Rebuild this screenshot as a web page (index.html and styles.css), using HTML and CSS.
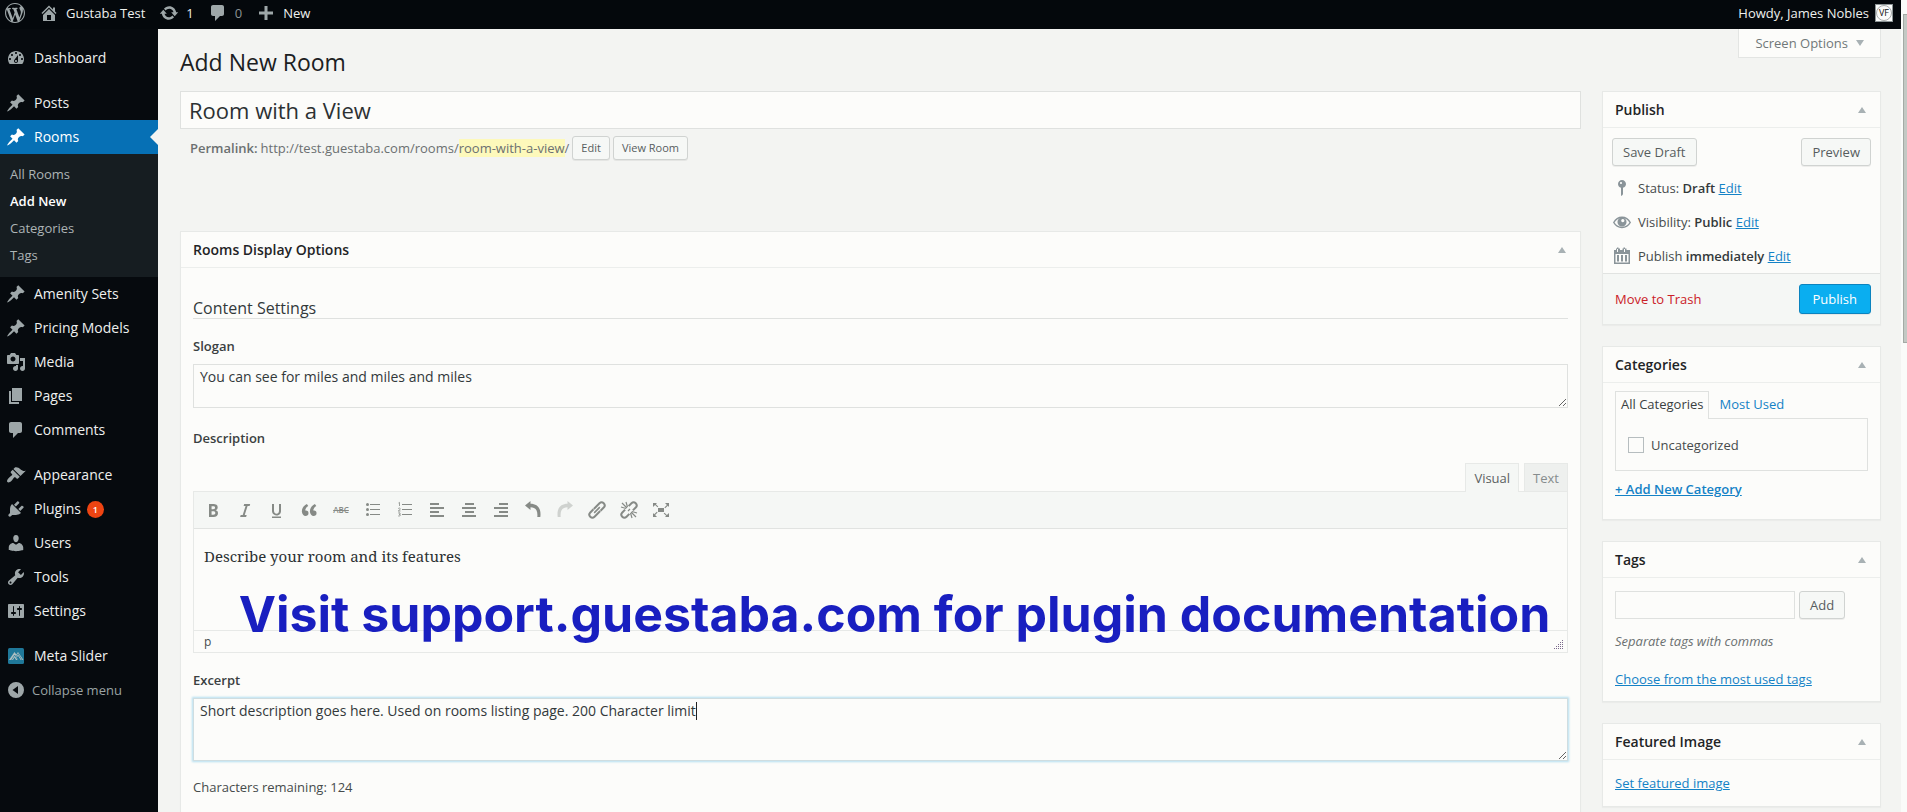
FILE: index.html
```html
<!DOCTYPE html>
<html lang="en">
<head>
<meta charset="utf-8">
<title>Add New Room</title>
<meta name="viewport" content="width=device-width, initial-scale=1">
<link rel="stylesheet" href="styles.css">
</head>
<body>
<svg class="sprite" aria-hidden="true">
  <symbol id="i-wp" viewBox="0 0 20 20"><path d="M20 10c0-5.51-4.49-10-10-10C4.48 0 0 4.49 0 10c0 5.52 4.48 10 10 10 5.51 0 10-4.48 10-10zM7.78 15.37L4.37 6.22c.55-.02 1.17-.08 1.17-.08.5-.06.44-1.13-.06-1.11 0 0-1.45.11-2.37.11-.18 0-.37 0-.58-.01C4.12 2.69 6.87 1.11 10 1.11c2.33 0 4.45.87 6.05 2.34-.68-.11-1.65.39-1.65 1.58 0 .74.45 1.36.9 2.1.35.61.55 1.36.55 2.46 0 1.49-1.4 5-1.4 5l-3.03-8.37c.54-.02.82-.17.82-.17.5-.05.44-1.25-.06-1.22 0 0-1.44.12-2.38.12-.87 0-2.33-.12-2.33-.12-.5-.03-.56 1.2-.06 1.22l.92.08 1.26 3.41zM17.41 10c.24-.64.74-1.87.43-4.25.7 1.29 1.05 2.71 1.05 4.25 0 3.29-1.73 6.24-4.4 7.78.97-2.59 1.94-5.2 2.92-7.78zM6.1 18.09C3.12 16.65 1.11 13.53 1.11 10c0-1.3.23-2.48.72-3.59C3.25 10.3 4.67 14.2 6.1 18.09zm4.03-6.63l2.58 6.98c-.86.29-1.76.45-2.71.45-.79 0-1.57-.11-2.29-.33.81-2.38 1.62-4.74 2.42-7.1z"/></symbol>
  <symbol id="i-home" viewBox="0 0 20 20"><path fill-rule="evenodd" d="M16 8.5l1.53 1.53-1.06 1.06L10 4.6l-6.47 6.49-1.06-1.06L10 2.5l4 4v-2h2v4zm-6-2.46l6 5.99V18H4v-5.97zM12 17v-5H8v5h4z"/></symbol>
  <symbol id="i-update" viewBox="0 0 20 20"><path d="M10.2 3.28c3.53 0 6.43 2.61 6.92 6h2.08l-3.5 4-3.5-4h2.32c-.45-1.97-2.21-3.45-4.32-3.45-1.45 0-2.73.71-3.54 1.78L4.95 5.66C6.23 4.2 8.11 3.28 10.2 3.28zm-.4 13.44c-3.52 0-6.43-2.61-6.92-6H.8l3.5-4 3.5 4H5.48c.45 1.97 2.21 3.45 4.32 3.45 1.45 0 2.73-.71 3.54-1.78l1.71 1.95c-1.28 1.46-3.15 2.38-5.25 2.38z"/></symbol>
  <symbol id="i-comment" viewBox="0 0 20 20"><path d="M5 2h9c1.1 0 2 .9 2 2v7c0 1.1-.9 2-2 2h-2l-5 5v-5H5c-1.1 0-2-.9-2-2V4c0-1.1.9-2 2-2z"/></symbol>
  <symbol id="i-plus" viewBox="0 0 20 20"><path d="M17 8.500v3h-5.500V17h-3v-5.500H3v-3h5.500V3h3v5.500z"/></symbol>
  <symbol id="i-dash" viewBox="0 0 20 20"><path fill-rule="evenodd" d="M3.760 16h12.480c1.100-1.370 1.760-3.110 1.760-5 0-4.420-3.580-8-8-8s-8 3.580-8 8c0 1.890.66 3.630 1.760 5zM10 4c.55 0 1 .45 1 1s-.45 1-1 1-1-.45-1-1 .45-1 1-1zM6 6c.55 0 1 .45 1 1s-.45 1-1 1-1-.45-1-1 .45-1 1-1zm8 0c.55 0 1 .45 1 1s-.45 1-1 1-1-.45-1-1 .45-1 1-1zm-5.370 5.550L12 7v6c0 1.100-.9 2-2 2s-2-.9-2-2c0-.57.24-1.080.63-1.450zM4 10c.55 0 1 .45 1 1s-.45 1-1 1-1-.45-1-1 .45-1 1-1zm12 0c.55 0 1 .45 1 1s-.45 1-1 1-1-.45-1-1 .45-1 1-1zm-5 3c0-.55-.45-1-1-1s-1 .45-1 1 .45 1 1 1 1-.45 1-1z"/></symbol>
  <symbol id="i-pin" viewBox="0 0 20 20"><path d="M10.44 3.02l1.82-1.82 6.36 6.35-1.83 1.82c-1.05-.68-2.48-.57-3.41.36l-.75.75c-.92.93-1.04 2.35-.35 3.41l-1.83 1.82-2.41-2.41-2.8 2.79c-.42.42-3.38 2.71-3.8 2.29s1.86-3.39 2.28-3.81l2.79-2.79L4.1 9.36l1.83-1.82c1.05.69 2.48.57 3.4-.36l.75-.75c.93-.92 1.05-2.35.36-3.41z"/></symbol>
  <symbol id="i-media" viewBox="0 0 20 20"><path fill-rule="evenodd" d="M13 11V4c0-.55-.45-1-1-1h-1.670L9 1H5L3.670 3H2c-.55 0-1 .45-1 1v7c0 .55.45 1 1 1h10c.55 0 1-.45 1-1zM7 4.500c1.380 0 2.500 1.120 2.500 2.500S8.380 9.500 7 9.500 4.500 8.380 4.500 7 5.620 4.500 7 4.500zM14 6h5v10.500c0 1.380-1.120 2.500-2.500 2.500S14 17.880 14 16.500s1.120-2.500 2.500-2.500c.17 0 .34.02.5.05V9h-3V6zm-4 8.050V13h2v3.500c0 1.380-1.120 2.500-2.500 2.500S7 17.880 7 16.500 8.120 14 9.500 14c.17 0 .34.02.5.05z"/></symbol>
  <symbol id="i-page" viewBox="0 0 20 20"><path d="M6 15V2h10v13H6zm-1 1h8v2H3V5h2v11z"/></symbol>
  <symbol id="i-brush" viewBox="0 0 20 20"><path d="M14.480 11.060L7.410 3.990l1.500-1.500c.5-.56 2.300-.47 3.510.32 1.210.8 1.430 1.280 2.910 2.100 1.180.64 2.450 1.260 4.450.85zm-.71.71L6.700 4.700 4.930 6.470c-.39.39-.39 1.020 0 1.410l1.060 1.060c.39.39.39 1.030 0 1.420-.6.6-1.430 1.110-2.210 1.690-.35.26-.7.53-1.010.84C1.430 14.230.4 16.080 1.400 17.070c.99 1 2.840-.03 4.180-1.360.31-.31.58-.66.85-1.020.57-.78 1.080-1.610 1.690-2.210.39-.39 1.020-.39 1.410 0l1.060 1.060c.39.39 1.020.39 1.410 0z"/></symbol>
  <symbol id="i-plug" viewBox="0 0 20 20"><path d="M13.11 4.36L9.87 7.6 8 5.73l3.24-3.24c.35-.34 1.05-.2 1.56.32.52.51.66 1.21.31 1.55zm-8 1.77l.91-1.12 9.01 9.01-1.19.84c-.71.71-2.63 1.16-3.82 1.16H6.14L4.9 17.26c-.59.59-1.54.59-2.12 0-.59-.58-.59-1.53 0-2.12l1.24-1.24v-3.88c0-1.13.4-3.19 1.09-3.89zm7.26 3.97l3.24-3.24c.34-.35 1.04-.21 1.55.31.52.51.66 1.21.31 1.55l-3.24 3.25z"/></symbol>
  <symbol id="i-user" viewBox="0 0 20 20"><path d="M10 9.25c-2.27 0-2.73-3.44-2.73-3.44C7 4.02 7.82 2 9.97 2c2.16 0 2.98 2.02 2.71 3.81 0 0-.41 3.44-2.68 3.44zm0 2.57L12.72 10c2.39 0 4.52 2.33 4.52 4.53v2.49s-3.65 1.13-7.24 1.13c-3.65 0-7.24-1.13-7.24-1.13v-2.49c0-2.25 1.94-4.48 4.47-4.48z"/></symbol>
  <symbol id="i-tool" viewBox="0 0 20 20"><path fill-rule="evenodd" d="M16.68 9.77c-1.34 1.34-3.3 1.67-4.95.99l-5.41 6.52c-.99.99-2.59.99-3.58 0s-.99-2.59 0-3.57l6.52-5.42c-.68-1.65-.35-3.61.99-4.95 1.28-1.28 3.12-1.62 4.72-1.06l-2.89 2.89 2.82 2.82 2.86-2.87c.53 1.58.18 3.39-1.08 4.65zM3.81 16.21c.4.39 1.04.39 1.43 0 .4-.4.4-1.04 0-1.43-.39-.4-1.03-.4-1.43 0-.39.39-.39 1.03 0 1.43z"/></symbol>
  <symbol id="i-set" viewBox="0 0 20 20"><path fill-rule="evenodd" d="M18 16V4c0-.55-.45-1-1-1H3c-.55 0-1 .45-1 1v12c0 .55.45 1 1 1h14c.55 0 1-.45 1-1zM8 11h1c.55 0 1 .45 1 1s-.45 1-1 1H8v1.500c0 .28-.22.5-.5.5s-.5-.22-.5-.5V13H6c-.55 0-1-.45-1-1s.45-1 1-1h1V5.500c0-.28.22-.5.5-.5s.5.22.5.5V11zm5-2h-1c-.55 0-1-.45-1-1s.45-1 1-1h1V5.500c0-.28.22-.5.5-.5s.5.22.5.5V7h1c.55 0 1 .45 1 1s-.45 1-1 1h-1v5.500c0 .28-.22.5-.5.5s-.5-.22-.5-.5V9z"/></symbol>
  <symbol id="i-meta" viewBox="0 0 20 20"><rect x="2" y="2" width="16" height="16" rx="1.500" fill="#1f7899"/><path d="M3 14L8.500 6l1.800 2.600L12 6l5.500 8h-2.800L12 9.800 10.800 11.600 12.300 14H10L8.500 11.500 7 14z" fill="#b0c0c2"/><path d="M5.500 14l3.200-5 3.100 5M9.800 11l2.300-3.300L16 14" stroke="#1f7899" stroke-width=".7" fill="none"/></symbol>
  <symbol id="i-collapse" viewBox="0 0 20 20"><path fill-rule="evenodd" d="M10 2a8 8 0 1 0 0 16 8 8 0 0 0 0-16zm2 4v8l-5.500-4z"/></symbol>
  <symbol id="i-status" viewBox="0 0 20 20"><path fill-rule="evenodd" d="M14 6c0 1.86-1.28 3.41-3 3.86V16c0 1-2 2-2 2V9.86c-1.72-.45-3-2-3-3.86 0-2.21 1.79-4 4-4s4 1.79 4 4zM8 5c0 .55.45 1 1 1s1-.45 1-1-.45-1-1-1-1 .45-1 1z"/></symbol>
  <symbol id="i-eye" viewBox="0 0 20 20"><path d="M1.800 10.500C5.500 3.600 14.500 3.600 18.200 10.500 14.500 17 5.500 17 1.800 10.500z" fill="none" stroke="currentColor" stroke-width="1.500"/><path fill-rule="evenodd" d="M10 5.500a4.500 4.500 0 1 0 .01 0zM10.800 7a1.600 1.600 0 1 1-.01 0z"/></symbol>
  <symbol id="i-cal" viewBox="0 0 20 20"><path fill-rule="evenodd" d="M2 4h2V2.500h1V1.500h1.500v1H8V4h2.500V2.500h1V1.500H13v1h1.500V4H18v14H2zM3.500 8v8.500h13V8zM5 9h2v6.500H5zm4 0h2v6.500H9zm4 0h2v6.500h-2z"/><path d="M5 3h1v3H5zM12 3h1v3h-1z" fill="#fcfcfa"/></symbol>
  <symbol id="i-bold" viewBox="0 0 20 20"><path fill-rule="evenodd" d="M6 4v13h4.540c1.370 0 2.460-.33 3.260-1 .8-.66 1.200-1.580 1.200-2.770 0-.84-.17-1.510-.51-2.010s-.9-.85-1.670-1.030v-.09c.57-.1 1.020-.4 1.360-.9s.51-1.130.51-1.910c0-1.140-.39-1.980-1.170-2.500C12.750 4.260 11.500 4 9.780 4H6zm2.570 5.150V6.260h1.360c.73 0 1.270.11 1.610.32.34.22.51.58.51 1.070 0 .54-.16.92-.47 1.150s-.82.35-1.510.35h-1.500zm0 2.190h1.600c1.440 0 2.160.53 2.160 1.610 0 .6-.17 1.050-.51 1.340s-.86.43-1.570.43H8.570v-3.380z"/></symbol>
  <symbol id="i-italic" viewBox="0 0 20 20"><path d="M15.200 4h-6l-.6 2h2l-2.900 9h-2l-.6 2h6l.6-2h-2l2.900-9h2z"/></symbol>
  <symbol id="i-under" viewBox="0 0 20 20"><path d="M14 4h-2v6.710c0 1.990-1.120 2.980-2.450 2.980-1.320 0-2.550-1-2.550-2.960V4H5v6.870c0 1.910 1 4.540 4.480 4.540 3.490 0 4.520-2.580 4.520-4.500V4zm0 14v-1.500H5V18h9z"/></symbol>
  <symbol id="i-quote" viewBox="0 0 20 20"><path d="M9.490 13.220c0-.74-.2-1.380-.61-1.900-.62-.78-1.830-.88-2.530-.72-.29-1.650 1.110-3.750 2.920-4.650L7.880 4c-2.730 1.300-5.420 4.280-4.960 8.050C3.210 14.430 4.590 16 6.540 16c.85 0 1.560-.25 2.120-.75s.83-1.180.83-2.030zm8.050 0c0-.74-.2-1.380-.61-1.900-.63-.78-1.830-.88-2.530-.72-.29-1.650 1.110-3.750 2.920-4.650L15.930 4c-2.730 1.300-5.410 4.280-4.950 8.050.29 2.380 1.660 3.950 3.610 3.950.85 0 1.560-.25 2.120-.75s.83-1.180.83-2.030z"/></symbol>
  <symbol id="i-ul" viewBox="0 0 20 20"><path d="M7 4h10v1H7zm0 5h10v1H7zm0 5h10v1H7z"/><circle cx="4.500" cy="4.500" r="1.500"/><circle cx="4.500" cy="9.500" r="1.500"/><circle cx="4.500" cy="14.500" r="1.500"/></symbol>
  <symbol id="i-ol" viewBox="0 0 20 20"><path d="M7 4h10v1H7zm0 5h10v1H7zm0 5h10v1H7z"/><path d="M3.500 3l1-.6V6M3.200 8.500q1.500-1 2 0t-2 2.500h2.300M3.200 13q2-.8 2 .3t-1.200.9q1.500 0 1.500 1t-2.300.8" fill="none" stroke="currentColor" stroke-width=".8"/></symbol>
  <symbol id="i-left" viewBox="0 0 20 20"><path d="M3 3h9v2H3zm0 4h14v2H3zm0 4h9v2H3zm0 4h14v2H3z"/></symbol>
  <symbol id="i-center" viewBox="0 0 20 20"><path d="M6 3h9v2H6zM3 7h14v2H3zm3 4h9v2H6zm-3 4h14v2H3z"/></symbol>
  <symbol id="i-right" viewBox="0 0 20 20"><path d="M8 3h9v2H8zM3 7h14v2H3zm5 4h9v2H8zm-5 4h14v2H3z"/></symbol>
  <symbol id="i-undo" viewBox="0 0 20 20"><path d="M7.500 1L2 5.500 7.500 10V7.200c5 0 7.500 3.300 6.800 9.800h3C18.500 8.500 14.500 3.800 7.500 3.800z"/></symbol>
  <symbol id="i-redo" viewBox="0 0 20 20"><path d="M12.500 1L18 5.500 12.500 10V7.200c-5 0-7.500 3.300-6.800 9.800h-3C1.500 8.500 5.500 3.800 12.500 3.800z"/></symbol>
  <symbol id="i-link" viewBox="0 0 20 20"><g transform="rotate(-45 10 10)" fill="none" stroke="currentColor" stroke-width="2"><path d="M11.500 13H3.500a3 3 0 0 1 0-6H8M8.500 7h8a3 3 0 0 1 0 6H12"/><path d="M6 10h8" stroke-width="1.600"/></g></symbol>
  <symbol id="i-unlink" viewBox="0 0 20 20"><g transform="rotate(-45 10 10)" fill="none" stroke="currentColor" stroke-width="2"><path d="M7.500 13h-4a3 3 0 0 1 0-6h4M12.500 7h4a3 3 0 0 1 0 6h-4"/></g><path d="M3 3l5 5M7 2l1.500 5M2 7l5 1.500M17 17l-5-5M13 18l-1.500-5M18 13l-5-1.500M9 11l2-2" stroke="currentColor" stroke-width="1.200"/></symbol>
  <symbol id="i-full" viewBox="0 0 20 20"><path d="M7 8h6v4H7zM2 3h4L4.800 4.200l2.500 2.300-.8.8-2.400-2.400L2 7zM18 3v4l-1.200-1.200-2.600 2.400-.8-.8 2.500-2.400L14 3zM2 17v-4l1.200 1.200 2.600-2.400.8.800-2.500 2.400L6 17zM18 17h-4l1.200-1.200-2.500-2.300.8-.8 2.400 2.400L18 13z"/></symbol>
</svg>

<div class="shell">
  <div class="page">
    <header class="adminbar">
      <a class="bar-item" href="#" aria-label="About WordPress"><svg class="icon"><use href="#i-wp"/></svg></a>
      <a class="bar-item" href="#"><svg class="icon"><use href="#i-home"/></svg>Gustaba Test</a>
      <a class="bar-item" href="#"><svg class="icon"><use href="#i-update"/></svg>1</a>
      <a class="bar-item muted" href="#"><svg class="icon"><use href="#i-comment"/></svg>0</a>
      <a class="bar-item" href="#"><svg class="icon"><use href="#i-plus"/></svg>New</a>
      <a class="bar-item account" href="#">Howdy, James Nobles<span class="avatar"><span>VF</span></span></a>
    </header>
    <div class="columns">
      <nav class="menu" aria-label="Main menu">
        <ul class="group">
          <li><a class="item" href="#"><svg class="icon"><use href="#i-dash"/></svg>Dashboard</a></li>
        </ul>
        <ul class="group">
          <li><a class="item" href="#"><svg class="icon"><use href="#i-pin"/></svg>Posts</a></li>
          <li>
            <a class="item current" href="#"><svg class="icon"><use href="#i-pin"/></svg>Rooms</a>
            <ul class="submenu">
              <li><a href="#">All Rooms</a></li>
              <li><a class="active" href="#">Add New</a></li>
              <li><a href="#">Categories</a></li>
              <li><a href="#">Tags</a></li>
            </ul>
          </li>
          <li><a class="item" href="#"><svg class="icon"><use href="#i-pin"/></svg>Amenity Sets</a></li>
          <li><a class="item" href="#"><svg class="icon"><use href="#i-pin"/></svg>Pricing Models</a></li>
          <li><a class="item" href="#"><svg class="icon"><use href="#i-media"/></svg>Media</a></li>
          <li><a class="item" href="#"><svg class="icon"><use href="#i-page"/></svg>Pages</a></li>
          <li><a class="item" href="#"><svg class="icon"><use href="#i-comment"/></svg>Comments</a></li>
        </ul>
        <ul class="group">
          <li><a class="item" href="#"><svg class="icon"><use href="#i-brush"/></svg>Appearance</a></li>
          <li><a class="item" href="#"><svg class="icon"><use href="#i-plug"/></svg>Plugins<span class="count">1</span></a></li>
          <li><a class="item" href="#"><svg class="icon"><use href="#i-user"/></svg>Users</a></li>
          <li><a class="item" href="#"><svg class="icon"><use href="#i-tool"/></svg>Tools</a></li>
          <li><a class="item" href="#"><svg class="icon"><use href="#i-set"/></svg>Settings</a></li>
        </ul>
        <ul class="group">
          <li><a class="item" href="#"><svg class="icon"><use href="#i-meta"/></svg>Meta Slider</a></li>
          <li><button class="item collapse" type="button"><svg class="icon"><use href="#i-collapse"/></svg>Collapse menu</button></li>
        </ul>
      </nav>

      <main class="content">
        <div class="top">
          <h1>Add New Room</h1>
          <button class="screen-options" type="button">Screen Options<span class="tri down"></span></button>
        </div>
        <div class="body-cols">
          <div class="primary">
            <input class="title-input" type="text" value="Room with a View" aria-label="Room title">
            <div class="permalink">
              <strong>Permalink:</strong>
              <span>http://test.guestaba.com/rooms/<mark>room-with-a-view</mark>/</span>
              <button class="btn tiny" type="button">Edit</button>
              <button class="btn tiny" type="button">View Room</button>
            </div>
            <section class="box options">
              <div class="box-head"><h2>Rooms Display Options</h2><button class="toggle" type="button" aria-label="Toggle panel"><span class="tri"></span></button></div>
              <div class="options-body">
                <h3>Content Settings</h3>
                <label class="field-label" for="slogan">Slogan</label>
                <textarea class="area slogan" id="slogan">You can see for miles and miles and miles</textarea>
                <div class="field-label description-label" id="desc-label">Description</div>
                <div class="editor-tabs">
                  <button class="etab on" type="button">Visual</button>
                  <button class="etab" type="button">Text</button>
                </div>
                <div class="editor">
                  <div class="toolbar">
                    <button class="tool" type="button" aria-label="Bold"><svg class="icon"><use href="#i-bold"/></svg></button>
                    <button class="tool" type="button" aria-label="Italic"><svg class="icon"><use href="#i-italic"/></svg></button>
                    <button class="tool" type="button" aria-label="Underline"><svg class="icon"><use href="#i-under"/></svg></button>
                    <button class="tool" type="button" aria-label="Blockquote"><svg class="icon"><use href="#i-quote"/></svg></button>
                    <button class="tool strike" type="button" aria-label="Strikethrough">ABC</button>
                    <button class="tool" type="button" aria-label="Bulleted list"><svg class="icon"><use href="#i-ul"/></svg></button>
                    <button class="tool" type="button" aria-label="Numbered list"><svg class="icon"><use href="#i-ol"/></svg></button>
                    <button class="tool" type="button" aria-label="Align left"><svg class="icon"><use href="#i-left"/></svg></button>
                    <button class="tool" type="button" aria-label="Align center"><svg class="icon"><use href="#i-center"/></svg></button>
                    <button class="tool" type="button" aria-label="Align right"><svg class="icon"><use href="#i-right"/></svg></button>
                    <button class="tool" type="button" aria-label="Undo"><svg class="icon"><use href="#i-undo"/></svg></button>
                    <button class="tool" type="button" aria-label="Redo" disabled><svg class="icon"><use href="#i-redo"/></svg></button>
                    <button class="tool" type="button" aria-label="Insert link"><svg class="icon"><use href="#i-link"/></svg></button>
                    <button class="tool" type="button" aria-label="Remove link"><svg class="icon"><use href="#i-unlink"/></svg></button>
                    <button class="tool" type="button" aria-label="Fullscreen"><svg class="icon"><use href="#i-full"/></svg></button>
                  </div>
                  <div class="editor-body" contenteditable="true" role="textbox" aria-labelledby="desc-label"><p>Describe your room and its features</p></div>
                  <div class="statusbar"><span>p</span>
                    <svg class="grip" viewBox="0 0 10 10" aria-hidden="true"><path d="M8 0h1v1H8zM6 2h1v1H6zM8 2h1v1H8zM4 4h1v1H4zM6 4h1v1H6zM8 4h1v1H8zM2 6h1v1H2zM4 6h1v1H4zM6 6h1v1H6zM8 6h1v1H8zM0 8h1v1H0zM2 8h1v1H2zM4 8h1v1H4zM6 8h1v1H6zM8 8h1v1H8z"/></svg>
                  </div>
                  <p class="caption">Visit support.guestaba.com for plugin documentation</p>
                </div>
                <label class="field-label excerpt-label" for="excerpt">Excerpt</label>
                <div class="excerpt-wrap">
                  <textarea class="area excerpt" id="excerpt">Short description goes here. Used on rooms listing page. 200 Character limit</textarea>
                  <span class="caret"></span>
                </div>
                <p class="remaining">Characters remaining: 124</p>
              </div>
            </section>
          </div>

          <aside class="secondary">
            <section class="box">
              <div class="box-head"><h2>Publish</h2><button class="toggle" type="button" aria-label="Toggle panel"><span class="tri"></span></button></div>
              <div class="draft-actions">
                <button class="btn" type="button">Save Draft</button>
                <button class="btn" type="button">Preview</button>
              </div>
              <ul class="meta">
                <li><svg class="icon"><use href="#i-status"/></svg><span>Status: <b>Draft</b> <a href="#">Edit</a></span></li>
                <li><svg class="icon"><use href="#i-eye"/></svg><span>Visibility: <b>Public</b> <a href="#">Edit</a></span></li>
                <li><svg class="icon"><use href="#i-cal"/></svg><span>Publish <b>immediately</b> <a href="#">Edit</a></span></li>
              </ul>
              <div class="publish-foot">
                <a class="trash" href="#">Move to Trash</a>
                <button class="btn primary-btn" type="button">Publish</button>
              </div>
            </section>
            <section class="box">
              <div class="box-head"><h2>Categories</h2><button class="toggle" type="button" aria-label="Toggle panel"><span class="tri"></span></button></div>
              <div class="cats">
                <div class="cat-tabs"><a class="ctab on" href="#">All Categories</a><a class="ctab" href="#">Most Used</a></div>
                <div class="cat-panel"><input type="checkbox" id="uncat"><label for="uncat">Uncategorized</label></div>
                <a class="add-cat" href="#">+ Add New Category</a>
              </div>
            </section>
            <section class="box">
              <div class="box-head"><h2>Tags</h2><button class="toggle" type="button" aria-label="Toggle panel"><span class="tri"></span></button></div>
              <div class="tags">
                <div class="tag-row"><input class="tag-input" type="text" aria-label="Add new tag"><button class="btn" type="button">Add</button></div>
                <p class="hint">Separate tags with commas</p>
                <a href="#">Choose from the most used tags</a>
              </div>
            </section>
            <section class="box">
              <div class="box-head"><h2>Featured Image</h2><button class="toggle" type="button" aria-label="Toggle panel"><span class="tri"></span></button></div>
              <div class="featured"><a href="#">Set featured image</a></div>
            </section>
          </aside>
        </div>
      </main>
    </div>
  </div>
  <div class="scroll-track"><div class="scroll-thumb"></div></div>
</div>
</body>
</html>
```

FILE: styles.css
```css
*, *::before, *::after { box-sizing: border-box; }
body {
  margin: 0;
  font: 13px/18px "Open Sans", sans-serif;
  color: #464b4c;
  background: #f3f4f2;
}
ul, h1, h2, h3, p { margin: 0; padding: 0; }
ul { list-style: none; }
button, input, textarea { font: inherit; color: inherit; margin: 0; }
button { cursor: pointer; }
a { color: #1482c6; }
.sprite { position: absolute; width: 0; height: 0; }
.icon { width: 20px; height: 20px; fill: currentColor; flex: none; }

.shell { display: flex; height: 100vh; overflow: hidden; }
.page { flex: 1; min-width: 0; display: flex; flex-direction: column; }
.scroll-track { width: 6px; padding: 14px 0 0 2px; background: #fafbf9; flex: none; }
.scroll-thumb { height: 329px; background: #c3c9c4; border: 1px solid #a4aaa5; border-right: 0; }

/* Admin bar */
.adminbar {
  display: flex;
  gap: 14px;
  height: 29px;
  padding: 0 8px 3px 5px;
  background: #04080c;
  flex: none;
}
.bar-item { display: flex; align-items: center; gap: 7px; color: #eef0ee; text-decoration: none; }
.bar-item .icon { color: #9ea7a9; }
.bar-item.muted { color: #8b9394; }
.account { margin-left: auto; gap: 6px; }
.avatar {
  display: flex; align-items: center; justify-content: center;
  width: 18px; height: 18px;
  background: #fbfcfb; border: 1px solid #8c9496;
}
.avatar span {
  width: 16px; height: 16px; border: 1px solid #a8acac; border-radius: 50%;
  font-size: 9px; line-height: 14px; color: #111; display: flex; justify-content: center;
}

/* Side menu */
.columns { flex: 1; display: flex; min-height: 0; }
.menu { width: 158px; flex: none; padding-top: 12px; background: #060a0e; overflow: hidden; }
.group { margin-bottom: 11px; }
.item {
  position: relative;
  display: flex; align-items: center; gap: 8px;
  width: 100%; height: 34px; padding: 0 6px;
  font-size: 14px; color: #eef0ee; text-decoration: none;
  background: none; border: 0;
}
.item .icon { color: #9ea7a9; }
.item.current { background: #0670b5; color: #fff; }
.item.current .icon { color: #fff; }
.item.current::after {
  content: ""; position: absolute; right: 0; top: 9px;
  border: 8px solid transparent; border-left: 0; border-right-color: #f3f4f2;
}
.item.collapse { gap: 6px; font-size: 13px; color: #9aa3a4; }
.submenu { padding: 7px 0 8px; background: #161d21; }
.submenu a { display: block; padding: 0 10px; line-height: 27px; color: #adb4b5; text-decoration: none; }
.submenu a.active { color: #fff; font-weight: 600; }
.count {
  width: 17px; height: 17px; margin-left: -2px; border-radius: 50%;
  background: #ee4412; color: #fff; font-size: 9px; font-weight: 600; line-height: 17px; text-align: center;
}

/* Page heading */
.content { flex: 1; min-width: 0; padding: 0 20px 0 22px; }
.top { display: flex; justify-content: space-between; align-items: flex-start; height: 62px; }
h1 { padding-top: 18px; font-size: 23px; line-height: 30px; font-weight: 400; color: #1b2022; }
.screen-options {
  display: flex; align-items: center; gap: 8px;
  height: 29px; padding: 0 16px; color: #707879;
  background: #fcfcfa; border: 1px solid #e3e5e3; border-top: 0;
}
.tri { display: block; border: 4px solid transparent; border-top: 0; border-bottom: 6px solid #a8b1b4; }
.tri.down { border-bottom: 0; border-top: 6px solid #a8b1b4; }

.body-cols { display: flex; gap: 21px; align-items: flex-start; }
.primary { flex: 1; min-width: 0; }
.secondary { width: 279px; flex: none; display: flex; flex-direction: column; gap: 21px; }

.title-input {
  display: block; width: 100%; height: 38px; padding: 0 8px;
  font-size: 22px; color: #2c3133;
  background: #fcfcfa; border: 1px solid #dfe1df;
}
.permalink { display: flex; align-items: center; gap: 3px; height: 38px; padding-left: 10px; margin-bottom: 64px; color: #6b7071; }
.permalink strong { font-weight: 600; }
mark { background: #fdf9bb; color: inherit; }

.btn {
  height: 28px; padding: 0 10px; white-space: nowrap;
  color: #565d5e; background: #f6f8f6; border: 1px solid #d0d3d1; border-radius: 3px;
  box-shadow: 0 1px 0 rgba(0,0,0,.06);
}
.btn.tiny { height: 24px; padding: 0 8px; font-size: 11px; }

/* Panels */
.box { background: #fcfcfa; border: 1px solid #e7e9e7; box-shadow: 0 1px 1px rgba(0,0,0,.03); }
.box-head {
  display: flex; justify-content: space-between; align-items: center;
  height: 36px; padding: 0 14px 0 12px; border-bottom: 1px solid #eceeec;
}
.box-head h2 { font-size: 14px; line-height: 20px; font-weight: 600; color: #1f2426; }
.toggle { padding: 0; border: 0; background: none; }

.options-body { padding: 31px 12px; }
h3 { margin-bottom: 18px; font-size: 16px; line-height: 19px; font-weight: 500; color: #33393a; border-bottom: 1px solid #dfe1df; }
.field-label { display: block; margin-bottom: 9px; font-weight: 600; color: #3a4041; }
.area {
  display: block; width: 100%; padding: 2px 6px;
  font-size: 14px; line-height: 20px; color: #33393a; resize: vertical;
  background: #fcfcfa; border: 1px solid #dfe1df; border-radius: 0; outline: 0;
}
.slogan { height: 44px; }
.description-label { margin: 21px 0 16px; }

.editor-tabs { display: flex; justify-content: flex-end; gap: 5px; }
.etab {
  height: 28px; padding: 0 8px; color: #868c8d;
  background: #eef0ee; border: 1px solid #e7e9e7; border-bottom: 0;
}
.etab.on { position: relative; height: 29px; margin-bottom: -1px; color: #5b6162; background: #f5f7f5; z-index: 1; }
.editor { position: relative; border: 1px solid #e7e9e7; }
.toolbar { display: flex; gap: 2px; height: 37px; padding: 3px 4px; background: #f5f7f5; border-bottom: 1px solid #e1e3e1; }
.tool {
  display: flex; align-items: center; justify-content: center;
  width: 30px; height: 30px; padding: 0; color: #868a86; border: 0; background: none;
}
.tool:disabled { color: #cfd2cf; }
.strike { font-size: 8px; font-weight: 600; text-decoration: line-through; }
.editor-body { height: 101px; padding: 15px 10px; outline: 0; font: 15px/24px "Noto Serif", "Liberation Serif", serif; color: #2c3133; }
.statusbar { display: flex; align-items: center; justify-content: space-between; height: 22px; padding: 0 3px 0 10px; border-top: 1px solid #e7e9e7; font-size: 12px; }
.grip { width: 10px; height: 10px; fill: #7c6a8c; align-self: flex-end; margin-bottom: 2px; }
.caption {
  position: absolute; left: 28px; right: 0; top: 92px;
  text-align: center; white-space: nowrap; pointer-events: none;
  font: 700 50px/60px Inter, sans-serif; color: #191fc0;
}
.excerpt-label { margin-top: 18px; }
.excerpt-wrap { position: relative; }
.excerpt { height: 63px; border-color: #cfdde0; box-shadow: 0 0 2px 1px #b4dff0; }
.caret { position: absolute; left: 503px; top: 4px; width: 1px; height: 18px; background: #222; }
.remaining { margin-top: 17px; }

/* Publish */
.draft-actions { display: flex; justify-content: space-between; padding: 10px 9px 5px; }
.meta { padding: 0 9px; }
.meta li { display: flex; align-items: center; gap: 6px; height: 34px; }
.meta .icon { color: #8a9499; }
.meta b { font-weight: 600; color: #33393a; }
.publish-foot {
  display: flex; justify-content: space-between; align-items: center;
  height: 51px; padding: 0 9px 0 12px; background: #f5f7f5; border-top: 1px solid #e1e3e1;
}
.trash { color: #cb2027; text-decoration: none; }
.primary-btn { height: 30px; padding: 0 13px; background: #0aaef0; border-color: #0b83bf; color: #fff; }

/* Categories */
.cats { padding: 8px 12px 11px; }
.cat-tabs { display: flex; }
.ctab { height: 27px; padding: 0 5px; border: 1px solid transparent; border-bottom: 0; line-height: 25px; text-decoration: none; }
.ctab + .ctab { margin-left: 4px; }
.ctab.on { position: relative; height: 28px; margin-bottom: -1px; color: #3a4041; background: #fcfcfa; border-color: #dfe1df; z-index: 1; }
.cat-panel { display: flex; align-items: center; gap: 7px; height: 53px; padding: 0 12px; border: 1px solid #dfe1df; }
.cat-panel input { appearance: none; width: 16px; height: 16px; background: #fcfcfa; border: 1px solid #b6bdbf; }
.add-cat { display: inline-block; margin: 9px 0 10px; font-weight: 600; }

/* Tags */
.tags { padding: 13px 12px; }
.tag-row { display: flex; gap: 4px; }
.tag-input { width: 180px; height: 28px; padding: 0 6px; background: #fcfcfa; border: 1px solid #dfe1df; }
.hint { margin: 13px 0 20px; font-style: italic; color: #6b7071; }
.featured { padding: 14px 12px; }
```
